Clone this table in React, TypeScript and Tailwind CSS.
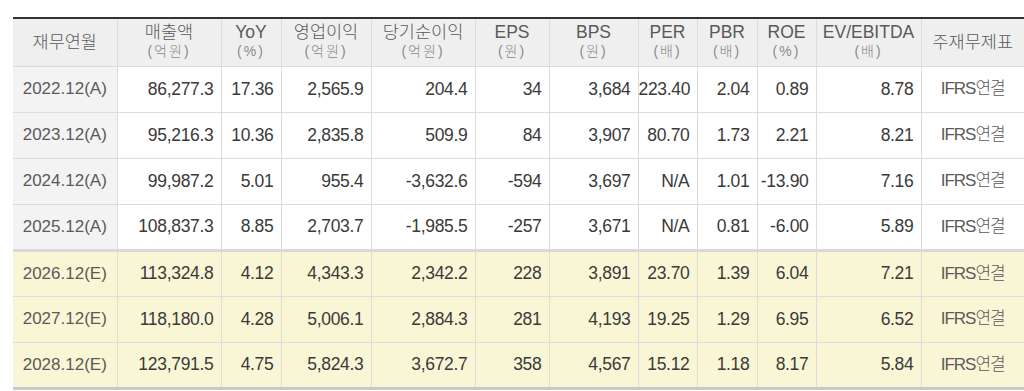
const columns = [
  { key: "period", label: "재무연월", unit: "", width: "w-[104px]" },
  { key: "sales", label: "매출액", unit: "(억원)", width: "w-[104px]" },
  { key: "yoy", label: "YoY", unit: "(%)", width: "w-[60px]" },
  { key: "op", label: "영업이익", unit: "(억원)", width: "w-[90px]" },
  { key: "net", label: "당기순이익", unit: "(억원)", width: "w-[104px]" },
  { key: "eps", label: "EPS", unit: "(원)", width: "w-[74px]" },
  { key: "bps", label: "BPS", unit: "(원)", width: "w-[89px]" },
  { key: "per", label: "PER", unit: "(배)", width: "w-[59px]" },
  { key: "pbr", label: "PBR", unit: "(배)", width: "w-[60px]" },
  { key: "roe", label: "ROE", unit: "(%)", width: "w-[59px]" },
  { key: "ev", label: "EV/EBITDA", unit: "(배)", width: "w-[105px]" },
  { key: "std", label: "주재무제표", unit: "", width: "w-[103px]" },
]

const rows = [
  ["2022.12(A)", "86,277.3", "17.36", "2,565.9", "204.4", "34", "3,684", "223.40", "2.04", "0.89", "8.78"],
  ["2023.12(A)", "95,216.3", "10.36", "2,835.8", "509.9", "84", "3,907", "80.70", "1.73", "2.21", "8.21"],
  ["2024.12(A)", "99,987.2", "5.01", "955.4", "-3,632.6", "-594", "3,697", "N/A", "1.01", "-13.90", "7.16"],
  ["2025.12(A)", "108,837.3", "8.85", "2,703.7", "-1,985.5", "-257", "3,671", "N/A", "0.81", "-6.00", "5.89"],
  ["2026.12(E)", "113,324.8", "4.12", "4,343.3", "2,342.2", "228", "3,891", "23.70", "1.39", "6.04", "7.21"],
  ["2027.12(E)", "118,180.0", "4.28", "5,006.1", "2,884.3", "281", "4,193", "19.25", "1.29", "6.95", "6.52"],
  ["2028.12(E)", "123,791.5", "4.75", "5,824.3", "3,672.7", "358", "4,567", "15.12", "1.18", "8.17", "5.84"],
]

export default function App() {
  return (
    <div className="h-[391px] w-[1024px] overflow-hidden bg-white pl-[13px] pt-[17px] font-['Liberation_Sans','Noto_Sans_CJK_KR',sans-serif]">
      <table className="w-[1011px] table-fixed border-collapse border-t-2 border-t-[#333333]">
        <colgroup>
          {columns.map((c) => (
            <col key={c.key} className={c.width} />
          ))}
        </colgroup>
        <thead>
          <tr className="h-[48px] bg-[#efefef]">
            {columns.map((c, i) => (
              <th
                key={c.key}
                className={
                  "border-b border-[#dcdcdc] p-0 text-center font-light " +
                  (i < columns.length - 1 ? "border-r" : "")
                }
              >
                <div className="text-[17.5px] leading-[19px] text-[#5a5a5a]">{c.label}</div>
                {c.unit && (
                  <div className="text-[14px] leading-[19px] tracking-[2px] text-[#8a8a8a]">{c.unit}</div>
                )}
              </th>
            ))}
          </tr>
        </thead>
        <tbody>
          {rows.map((r, ri) => {
            const est = r[0].endsWith("(E)")
            const divider = ri === 3
            const last = ri === rows.length - 1
            const bottom = divider
              ? "border-b-[3px] border-b-[#d9d9d9]"
              : last
                ? "border-b-[3px] border-b-[#c9c9c9]"
                : "border-b"
            return (
              <tr key={r[0]} className={"h-[46px] " + (est ? "bg-[#f9f6d6]" : "bg-white")}>
                {/* 재무연월 */}
                <td
                  className={
                    "border-r border-[#dcdcdc] p-0 text-center text-[17px] text-[#5a5a5a] " +
                    (est ? "" : "bg-[#f3f3f3] ") +
                    bottom
                  }
                >
                  {r[0]}
                </td>
                {r.slice(1).map((v, ci) => (
                  <td
                    key={ci}
                    className={
                      "border-r border-[#dcdcdc] p-0 pr-[7px] text-right text-[17.5px] tracking-[-0.3px] text-[#3a3a3a] " +
                      bottom
                    }
                  >
                    {v}
                  </td>
                ))}
                {/* 주재무제표 */}
                <td
                  className={
                    "border-[#dcdcdc] p-0 text-center text-[17px] font-light tracking-[-1px] text-[#5a5a5a] " +
                    bottom
                  }
                >
                  IFRS연결
                </td>
              </tr>
            )
          })}
        </tbody>
      </table>
    </div>
  )
}
